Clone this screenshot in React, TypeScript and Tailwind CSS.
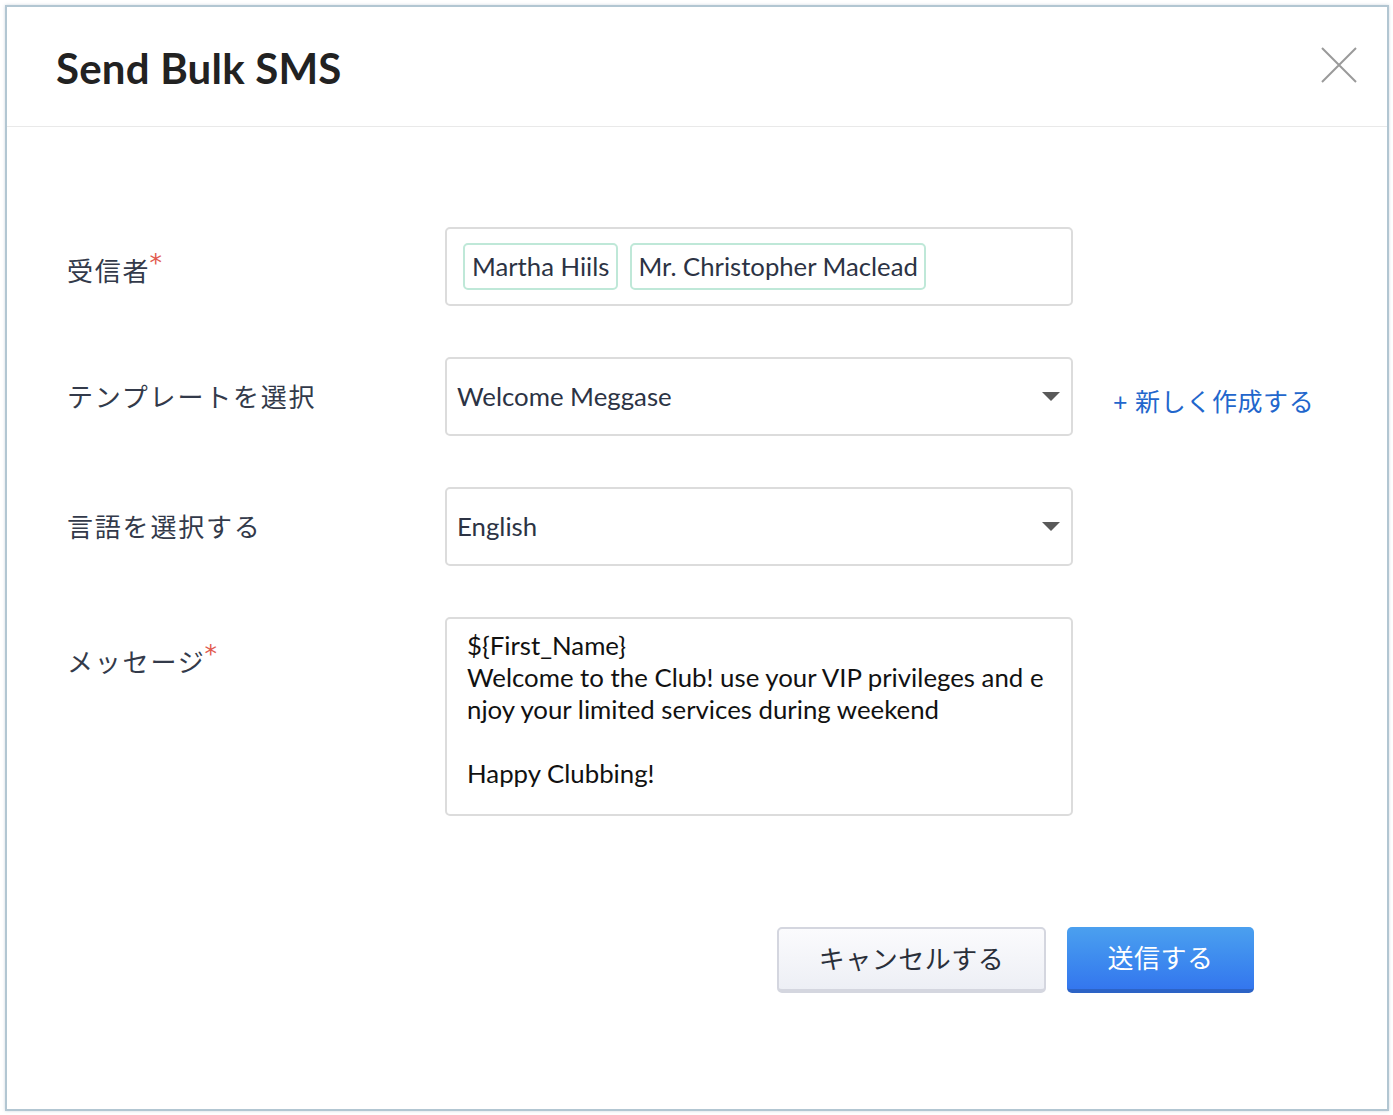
import React from "react";

const font = { fontFamily: 'Lato, "Noto Sans CJK JP", sans-serif' };

function Caret() {
  return (
    <svg width="18" height="9" viewBox="0 0 18 9" className="shrink-0">
      <path d="M0 0 L18 0 L9 9 Z" fill="#595959" />
    </svg>
  );
}

function Label({ text, required }: { text: string; required?: boolean }) {
  return (
    <div className="text-[26px] text-[#333a4a] leading-none tracking-[1.8px] whitespace-nowrap">
      {text}
      {required && (
        <span className="relative -top-[10px] -ml-[1px] text-[25px] font-['DejaVu_Sans'] text-[#e25b4f] tracking-normal">*</span>
      )}
    </div>
  );
}

export default function App() {
  return (
    <div className="w-[1393px] h-[1115px] bg-white pt-[5px] pl-[5px] pr-[4px] pb-[4px]" style={font}>
      <div className="w-full h-full border-2 border-[#b2c6d2] bg-white shadow-[0_0_3px_rgba(120,150,170,0.35)] flex flex-col">
        {/* header */}
        <div className="h-[120px] border-b border-[#e9e9e9] flex items-center justify-between pl-[49px] pr-[30px]">
          <div className="text-[42px] font-bold text-[#222] tracking-[0.2px] pt-[4px]">Send Bulk SMS</div>
          <svg width="36" height="36" viewBox="0 0 36 36" className="mt-[-4px]">
            <path d="M1 1 L35 35 M35 1 L1 35" stroke="#9a9a9a" strokeWidth="2" />
          </svg>
        </div>

        {/* body */}
        <div className="pl-[60px] pt-[100px] grid grid-cols-[378px_628px_auto] gap-y-[51px] items-center">
          <div className="pt-[10px]">
            <Label text="受信者" required />
          </div>
          <div className="h-[79px] border-2 border-[#dcdcdc] rounded-[5px] flex items-center gap-[12px] pl-[16px]">
            <span className="h-[47px] px-[7px] border-2 border-[#bfe8d8] rounded-[5px] flex items-center text-[25.7px] text-[#2c3344]">Martha Hiils</span>
            <span className="h-[47px] px-[6px] border-2 border-[#bfe8d8] rounded-[5px] flex items-center text-[25.7px] text-[#2c3344]">Mr. Christopher Maclead</span>
          </div>
          <div />

          <Label text="テンプレートを選択" />
          <div className="h-[79px] border-2 border-[#dcdcdc] rounded-[5px] flex items-center justify-between pl-[10px] pr-[11px]">
            <span className="text-[25.8px] text-[#2c3344]">Welcome Meggase</span>
            <Caret />
          </div>
          <div className="pl-[40px] pt-[10px] text-[25px] text-[#2266cc] tracking-[0.6px]">+ 新しく作成する</div>

          <Label text="言語を選択する" />
          <div className="h-[79px] border-2 border-[#dcdcdc] rounded-[5px] flex items-center justify-between pl-[10px] pr-[11px]">
            <span className="text-[25.8px] text-[#2c3344]">English</span>
            <Caret />
          </div>
          <div />

          <div className="self-start pt-[32px]">
            <Label text="メッセージ" required />
          </div>
          <div className="h-[199px] border-2 border-[#dcdcdc] rounded-[5px] pl-[20px] pt-[10px] text-[25.8px] leading-[32px] text-[#111]">
            <div>{"${First_Name}"}</div>
            <div>Welcome to the Club! use your VIP privileges and e</div>
            <div>njoy your limited services during weekend</div>
            <div>&nbsp;</div>
            <div>Happy Clubbing!</div>
          </div>
          <div />
        </div>

        {/* footer buttons */}
        <div className="flex justify-end gap-[21px] pr-[133px] mt-[111px]">
          <button className="w-[269px] h-[66px] rounded-[5px] border-2 border-b-[4px] border-[#d4d6df] bg-gradient-to-b from-[#fbfbfd] to-[#edeff5] text-[26px] text-[#2a2f3a] tracking-[0.5px]">
            キャンセルする
          </button>
          <button className="w-[187px] h-[66px] rounded-[5px] border-b-[4px] border-[#2c63c6] bg-gradient-to-b from-[#4ba0ef] to-[#3476ee] text-[26px] text-white tracking-[0.5px]">
            送信する
          </button>
        </div>
      </div>
    </div>
  );
}
